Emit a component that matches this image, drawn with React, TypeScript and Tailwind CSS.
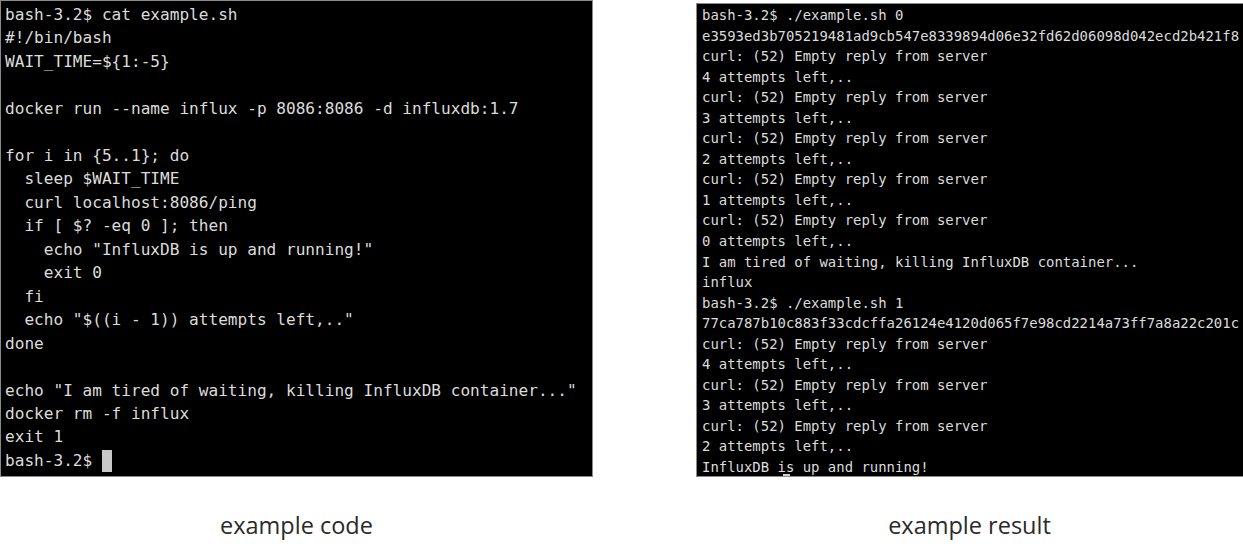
const codeLines = [
  "bash-3.2$ cat example.sh",
  "#!/bin/bash",
  "WAIT_TIME=${1:-5}",
  "",
  "docker run --name influx -p 8086:8086 -d influxdb:1.7",
  "",
  "for i in {5..1}; do",
  "  sleep $WAIT_TIME",
  "  curl localhost:8086/ping",
  "  if [ $? -eq 0 ]; then",
  '    echo "InfluxDB is up and running!"',
  "    exit 0",
  "  fi",
  '  echo "$((i - 1)) attempts left,.."',
  "done",
  "",
  'echo "I am tired of waiting, killing InfluxDB container..."',
  "docker rm -f influx",
  "exit 1",
];

const resultLines = [
  "bash-3.2$ ./example.sh 0",
  "e3593ed3b705219481ad9cb547e8339894d06e32fd62d06098d042ecd2b421f8",
  "curl: (52) Empty reply from server",
  "4 attempts left,..",
  "curl: (52) Empty reply from server",
  "3 attempts left,..",
  "curl: (52) Empty reply from server",
  "2 attempts left,..",
  "curl: (52) Empty reply from server",
  "1 attempts left,..",
  "curl: (52) Empty reply from server",
  "0 attempts left,..",
  "I am tired of waiting, killing InfluxDB container...",
  "influx",
  "bash-3.2$ ./example.sh 1",
  "77ca787b10c883f33cdcffa26124e4120d065f7e98cd2214a73ff7a8a22c201c",
  "curl: (52) Empty reply from server",
  "4 attempts left,..",
  "curl: (52) Empty reply from server",
  "3 attempts left,..",
  "curl: (52) Empty reply from server",
  "2 attempts left,..",
  "InfluxDB is up and running!",
];

export default function App() {
  return (
    <div className="w-[1243px] h-[546px] bg-white overflow-hidden">
      <div className="flex items-start">
        {/* left terminal */}
        <div className="w-[593px] h-[477px] bg-black border border-[#8a8a8a] pl-[4px] pt-[2px] text-[#dcdcdc] font-['DejaVu_Sans_Mono',monospace] text-[16.1px] leading-[23.47px] whitespace-pre">
          {codeLines.map((line, i) => (
            <div key={i} className="h-[23.47px]">
              {line}
            </div>
          ))}
          <div className="h-[23.47px] flex items-center">
            <span>bash-3.2$ </span>
            <span className="inline-block w-[10px] h-[22px] bg-[#c8c8c8]" />
          </div>
        </div>
        {/* right terminal */}
        <div className="ml-[103px] mt-[3px] flex-1 h-[474px] bg-black border-t border-b border-l border-[#8a8a8a] pl-[5px] pt-[1px] text-[#dcdcdc] font-['DejaVu_Sans_Mono',monospace] text-[13.95px] leading-[20.55px] whitespace-pre overflow-hidden relative">
          {resultLines.map((line, i) => (
            <div key={i} className="h-[20.55px]">
              {line}
            </div>
          ))}
          <span className="absolute left-[86px] bottom-0 w-[7px] h-[2px] bg-[#d0d0d0]" />
        </div>
      </div>
      <div className="flex mt-[34px] text-[#2a2a2a] font-['Open_Sans',sans-serif] text-[23.5px] leading-[28px]">
        <div className="w-[593px] text-center">example code</div>
        <div className="ml-[103px] flex-1 text-center">example result</div>
      </div>
    </div>
  );
}
